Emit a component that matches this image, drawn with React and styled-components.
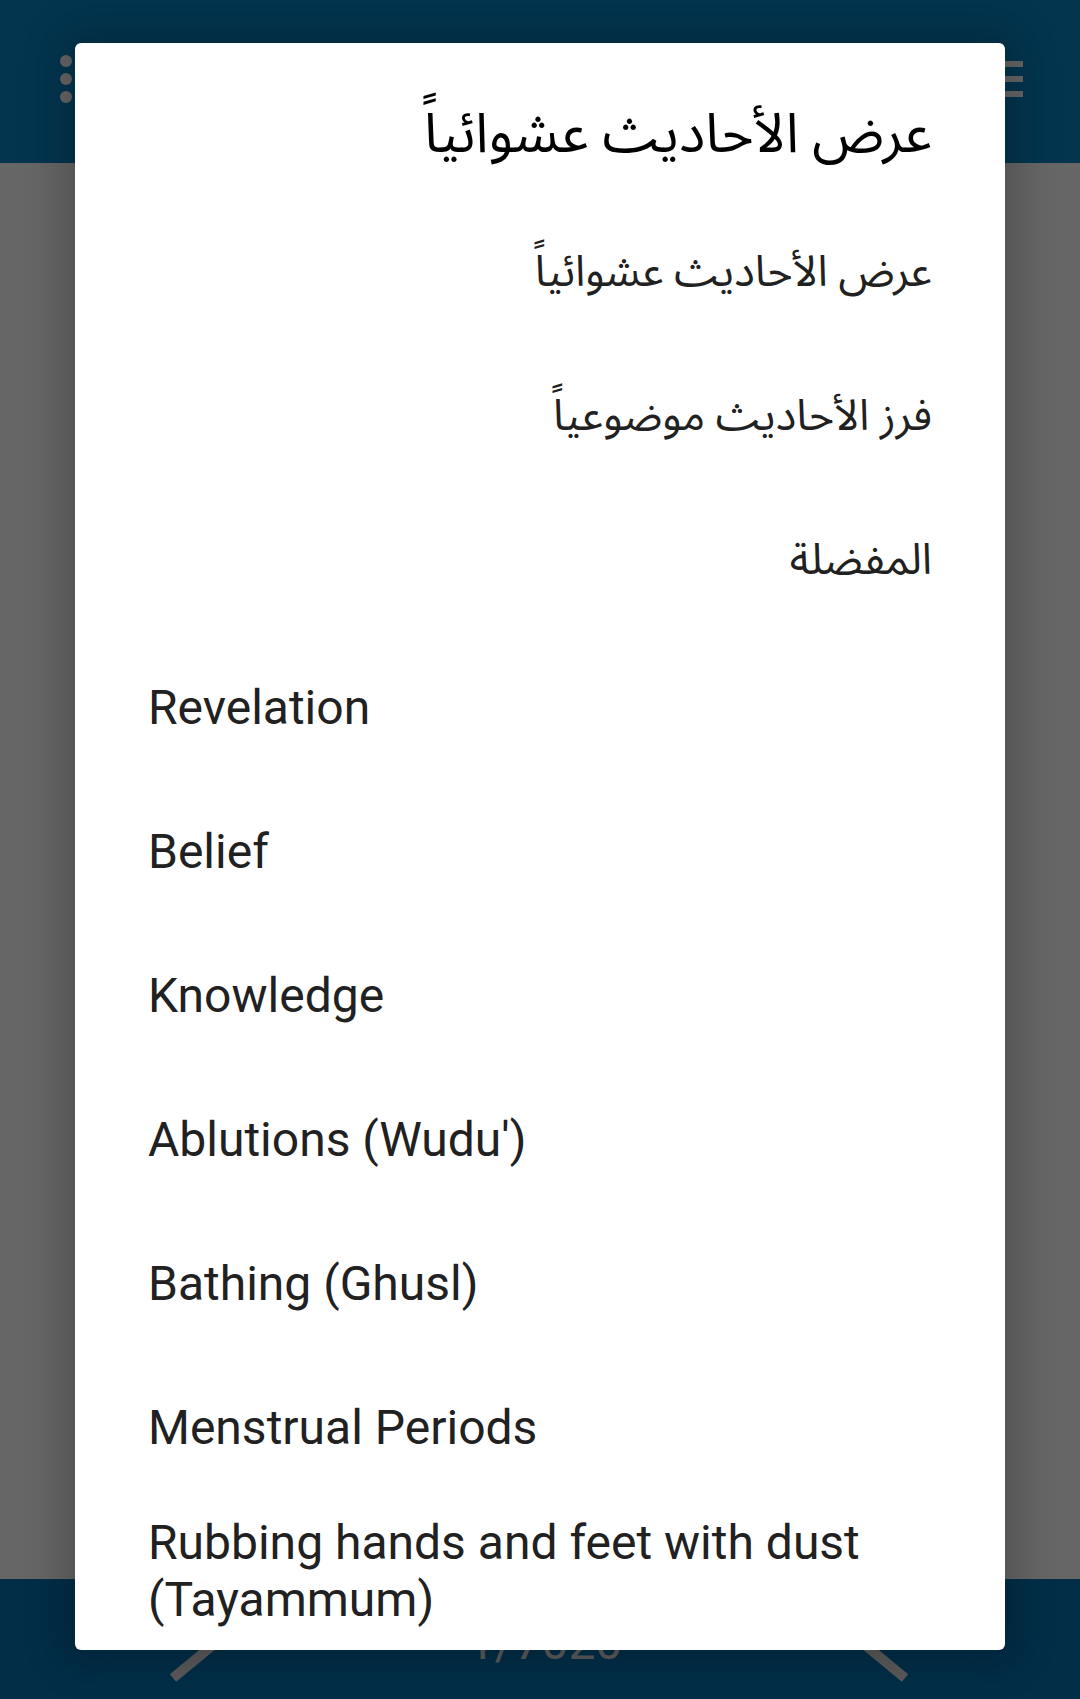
import React from 'react';
import styled, { createGlobalStyle } from 'styled-components';

const GlobalStyle = createGlobalStyle`
  html, body {
    margin: 0;
    padding: 0;
    background: #666666;
  }
  * { box-sizing: border-box; }
`

const FONT = `Roboto, "Noto Sans Arabic", "Noto Naskh Arabic", "DejaVu Sans", sans-serif`

const Screen = styled.div`
  position: relative;
  width: 1080px;
  height: 1699px;
  display: flex;
  flex-direction: column;
  overflow: hidden;
  font-family: ${FONT};
`

const TopBar = styled.div`
  height: 163px;
  background: #03354f;
  display: flex;
  justify-content: space-between;
  align-items: flex-start;
  padding: 55px 57px 0 60px;
`

const Body = styled.div`
  flex: 1;
  background: #666666;
`

const BottomBar = styled.div`
  height: 120px;
  background: #022e48;
  display: flex;
  align-items: flex-start;
  padding: 16px 167px 0 165px;
`

const Counter = styled.div`
  flex: 1;
  text-align: center;
  margin-top: 20px;
  padding-left: 12px;
  font-size: 48px;
  line-height: 56px;
  color: #5b5b5b;
`

const Dialog = styled.div`
  position: absolute;
  top: 43px;
  left: 75px;
  width: 930px;
  height: 1607px;
  background: #ffffff;
  border-radius: 6px;
  overflow: hidden;
  box-shadow: 0 0 40px 12px rgba(0, 0, 0, 0.22);
`

const Title = styled.div`
  height: 156px;
  padding: 54px 73px 0;
  direction: rtl;
  text-align: right;
  font-size: 55px;
  line-height: 72px;
  color: #000000;
`

const List = styled.div`
  display: flex;
  flex-direction: column;
`

const Item = styled.div`
  min-height: 144px;
  padding: ${p => (p.$rtl ? '0' : '8px')} 73px 0;
  display: flex;
  align-items: center;
  direction: ${p => (p.$rtl ? 'rtl' : 'ltr')};
  font-size: ${p => (p.$rtl ? 43 : 48)}px;
  line-height: 57px;
  color: #212121;
`

const MoreIcon = () => (
  <svg width="12" height="48" viewBox="0 0 12 48">
    <circle cx="6" cy="6" r="6" fill="#666" />
    <circle cx="6" cy="24" r="6" fill="#666" />
    <circle cx="6" cy="42" r="6" fill="#666" />
  </svg>
)

const MenuIcon = () => (
  <svg width="54" height="42" viewBox="0 0 54 42" style={{ marginTop: 6 }}>
    <rect x="0" y="0" width="54" height="6" fill="#666" />
    <rect x="0" y="15" width="54" height="6" fill="#666" />
    <rect x="0" y="30" width="54" height="6" fill="#666" />
  </svg>
)

const Chevron = ({ dir }) => (
  <svg width="60" height="90" viewBox="0 0 60 90">
    <polyline
      points={dir === 'right' ? '8,7 54,45 8,83' : '52,7 6,45 52,83'}
      fill="none"
      stroke="#5a5a5a"
      strokeWidth="10"
    />
  </svg>
)

const items = [
  { text: 'عرض الأحاديث عشوائياً', rtl: true },
  { text: 'فرز الأحاديث موضوعياً', rtl: true },
  { text: 'المفضلة', rtl: true },
  { text: 'Revelation' },
  { text: 'Belief' },
  { text: 'Knowledge' },
  { text: "Ablutions (Wudu')" },
  { text: 'Bathing (Ghusl)' },
  { text: 'Menstrual Periods' },
  { text: 'Rubbing hands and feet with dust (Tayammum)' },
]

const App = () => {
  return (
    <Screen>
      <GlobalStyle />
      <TopBar>
        <MoreIcon />
        <MenuIcon />
      </TopBar>
      <Body />
      <BottomBar>
        <Chevron dir="right" />
        <Counter>1/7020</Counter>
        <Chevron dir="left" />
      </BottomBar>
      <Dialog>
        <Title>عرض الأحاديث عشوائياً</Title>
        <List>
          {items.map(item => (
            <Item key={item.text} $rtl={item.rtl}>{item.text}</Item>
          ))}
        </List>
      </Dialog>
    </Screen>
  )
}

export default App;
